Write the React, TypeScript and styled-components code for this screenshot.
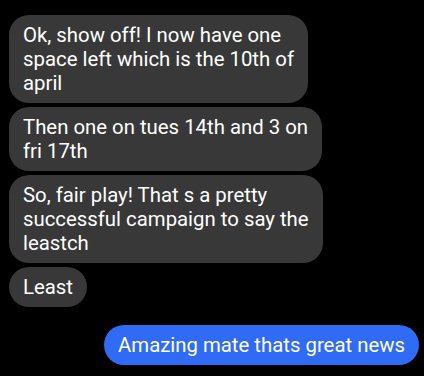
import React from "react";
import styled, { createGlobalStyle } from "styled-components";

const Global = createGlobalStyle`
  html, body { margin: 0; padding: 0; background: #000; }
  body { font-family: Roboto, "Noto Sans", "Liberation Sans", sans-serif; }
`;

const Thread = styled.div`
  width: 424px;
  height: 376px;
  box-sizing: border-box;
  padding: 15px 5px 0 9px;
  display: flex;
  flex-direction: column;
  gap: 4px;
  background: #000;
`;

const Bubble = styled.div<{ $out?: boolean }>`
  align-self: ${(p) => (p.$out ? "flex-end" : "flex-start")};
  background: ${(p) => (p.$out ? "#2f6bf5" : "#383838")};
  color: #fff;
  font-size: 20.35px;
  line-height: 24px;
  padding: 8px 14px;
  border-radius: 20px;
  white-space: nowrap;
  margin-top: ${(p) => (p.$out ? "14px" : "0")};
`;

const incoming = [
  ["Ok, show off! I now have one", "space left which is the 10th of", "april"],
  ["Then one on tues 14th and 3 on", "fri 17th"],
  ["So, fair play! That s a pretty", "successful campaign to say the", "leastch"],
  ["Least"],
];

export default function App() {
  return (
    <>
      <Global />
      <Thread>
        {incoming.map((lines, i) => (
          <Bubble key={i}>
            {lines.map((l, j) => (
              <React.Fragment key={j}>
                {j > 0 && <br />}
                {l}
              </React.Fragment>
            ))}
          </Bubble>
        ))}
        <Bubble $out>Amazing mate thats great news</Bubble>
      </Thread>
    </>
  );
}
